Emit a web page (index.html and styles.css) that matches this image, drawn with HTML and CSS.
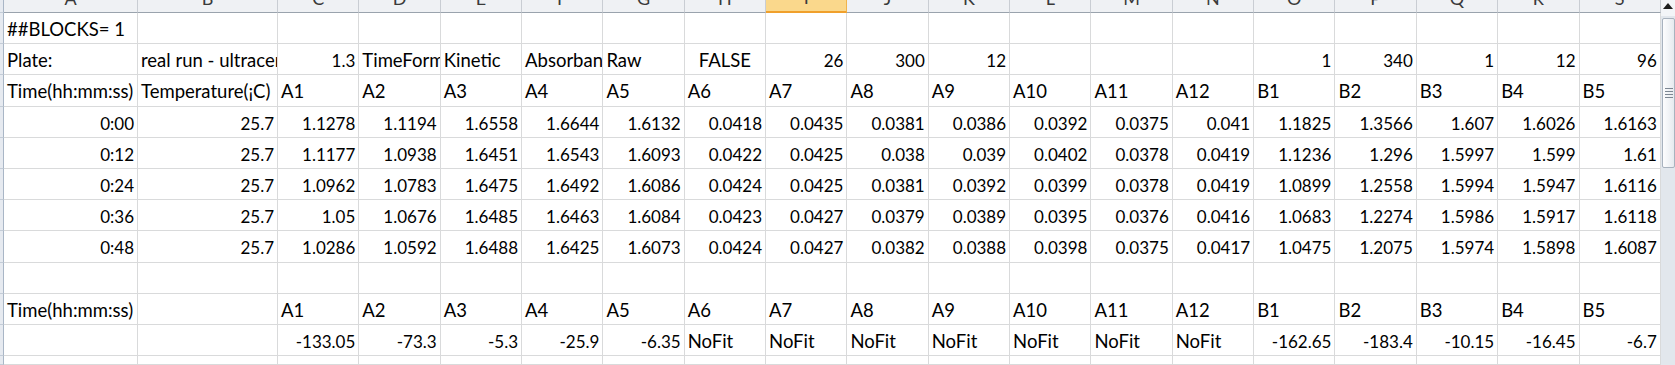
FILE: index.html
```html
<!DOCTYPE html>
<html lang="en">
<head>
    <meta charset="UTF-8">
    <title>Plate reader export</title>
    <link rel="stylesheet" href="styles.css">
</head>
<body>
<div class="window">
    <div class="sheet">
        <!-- column headers -->
        <span class="rh"></span><span class="ch">A</span><span class="ch">B</span><span class="ch">C</span><span class="ch">D</span><span class="ch">E</span><span class="ch">F</span><span class="ch">G</span><span class="ch">H</span><span class="ch sel">I</span><span class="ch">J</span><span class="ch">K</span><span class="ch">L</span><span class="ch">M</span><span class="ch">N</span><span class="ch">O</span><span class="ch">P</span><span class="ch">Q</span><span class="ch">R</span><span class="ch">S</span>

        <!-- row 1 -->
        <span class="rh"></span><span>##BLOCKS= 1</span><span></span><span></span><span></span><span></span><span></span><span></span><span></span><span></span><span></span><span></span><span></span><span></span><span></span><span></span><span></span><span></span><span></span><span></span>

        <!-- row 2 -->
        <span class="rh"></span><span>Plate:</span><span>real run - ultracentrifuge</span><span class="n">1.3</span><span>TimeFormat</span><span>Kinetic</span><span>Absorbance</span><span>Raw</span><span class="b">FALSE</span><span class="n">26</span><span class="n">300</span><span class="n">12</span><span></span><span></span><span></span><span class="n">1</span><span class="n">340</span><span class="n">1</span><span class="n">12</span><span class="n">96</span>

        <!-- row 3 -->
        <span class="rh"></span><span>Time(hh:mm:ss)</span><span>Temperature(¡C)</span><span>A1</span><span>A2</span><span>A3</span><span>A4</span><span>A5</span><span>A6</span><span>A7</span><span>A8</span><span>A9</span><span>A10</span><span>A11</span><span>A12</span><span>B1</span><span>B2</span><span>B3</span><span>B4</span><span>B5</span>

        <!-- rows 4-8: readings -->
        <span class="rh"></span><span class="n">0:00</span><span class="n">25.7</span><span class="n">1.1278</span><span class="n">1.1194</span><span class="n">1.6558</span><span class="n">1.6644</span><span class="n">1.6132</span><span class="n">0.0418</span><span class="n">0.0435</span><span class="n">0.0381</span><span class="n">0.0386</span><span class="n">0.0392</span><span class="n">0.0375</span><span class="n">0.041</span><span class="n">1.1825</span><span class="n">1.3566</span><span class="n">1.607</span><span class="n">1.6026</span><span class="n">1.6163</span>

        <span class="rh"></span><span class="n">0:12</span><span class="n">25.7</span><span class="n">1.1177</span><span class="n">1.0938</span><span class="n">1.6451</span><span class="n">1.6543</span><span class="n">1.6093</span><span class="n">0.0422</span><span class="n">0.0425</span><span class="n">0.038</span><span class="n">0.039</span><span class="n">0.0402</span><span class="n">0.0378</span><span class="n">0.0419</span><span class="n">1.1236</span><span class="n">1.296</span><span class="n">1.5997</span><span class="n">1.599</span><span class="n">1.61</span>

        <span class="rh"></span><span class="n">0:24</span><span class="n">25.7</span><span class="n">1.0962</span><span class="n">1.0783</span><span class="n">1.6475</span><span class="n">1.6492</span><span class="n">1.6086</span><span class="n">0.0424</span><span class="n">0.0425</span><span class="n">0.0381</span><span class="n">0.0392</span><span class="n">0.0399</span><span class="n">0.0378</span><span class="n">0.0419</span><span class="n">1.0899</span><span class="n">1.2558</span><span class="n">1.5994</span><span class="n">1.5947</span><span class="n">1.6116</span>

        <span class="rh"></span><span class="n">0:36</span><span class="n">25.7</span><span class="n">1.05</span><span class="n">1.0676</span><span class="n">1.6485</span><span class="n">1.6463</span><span class="n">1.6084</span><span class="n">0.0423</span><span class="n">0.0427</span><span class="n">0.0379</span><span class="n">0.0389</span><span class="n">0.0395</span><span class="n">0.0376</span><span class="n">0.0416</span><span class="n">1.0683</span><span class="n">1.2274</span><span class="n">1.5986</span><span class="n">1.5917</span><span class="n">1.6118</span>

        <span class="rh"></span><span class="n">0:48</span><span class="n">25.7</span><span class="n">1.0286</span><span class="n">1.0592</span><span class="n">1.6488</span><span class="n">1.6425</span><span class="n">1.6073</span><span class="n">0.0424</span><span class="n">0.0427</span><span class="n">0.0382</span><span class="n">0.0388</span><span class="n">0.0398</span><span class="n">0.0375</span><span class="n">0.0417</span><span class="n">1.0475</span><span class="n">1.2075</span><span class="n">1.5974</span><span class="n">1.5898</span><span class="n">1.6087</span>

        <!-- row 9 -->
        <span class="rh"></span><span></span><span></span><span></span><span></span><span></span><span></span><span></span><span></span><span></span><span></span><span></span><span></span><span></span><span></span><span></span><span></span><span></span><span></span><span></span>

        <!-- row 10 -->
        <span class="rh"></span><span>Time(hh:mm:ss)</span><span></span><span>A1</span><span>A2</span><span>A3</span><span>A4</span><span>A5</span><span>A6</span><span>A7</span><span>A8</span><span>A9</span><span>A10</span><span>A11</span><span>A12</span><span>B1</span><span>B2</span><span>B3</span><span>B4</span><span>B5</span>

        <!-- row 11: fit results -->
        <span class="rh"></span><span></span><span></span><span class="n">-133.05</span><span class="n">-73.3</span><span class="n">-5.3</span><span class="n">-25.9</span><span class="n">-6.35</span><span>NoFit</span><span>NoFit</span><span>NoFit</span><span>NoFit</span><span>NoFit</span><span>NoFit</span><span>NoFit</span><span class="n">-162.65</span><span class="n">-183.4</span><span class="n">-10.15</span><span class="n">-16.45</span><span class="n">-6.7</span>

        <!-- row 12 (cut off) -->
        <span class="rh"></span><span></span><span></span><span></span><span></span><span></span><span></span><span></span><span></span><span></span><span></span><span></span><span></span><span></span><span></span><span></span><span></span><span></span><span></span><span></span>
    </div>

    <div class="vscroll">
        <div class="up"></div>
        <div class="thumb"><div class="grip"></div></div>
    </div>
</div>
</body>
</html>
```

FILE: styles.css
```css
body {
    margin: 0;
    background: #fff;
    font-family: Lato, "Liberation Sans", sans-serif;
    color: #000;
    overflow: hidden;
}

.window {
    display: flex;
    height: 365px;
    overflow: hidden;
}

.sheet {
    flex: none;
    width: 1661px;
    display: grid;
    grid-template-columns: 4px 134px 140px repeat(17, 81.35px);
    grid-template-rows: 13px repeat(11, 31.2px) 1fr;
}

.sheet > span {
    box-sizing: border-box;
    border-right: 1px solid #d9dadb;
    border-bottom: 1px solid #d9dadb;
    overflow: hidden;
    white-space: nowrap;
    font-size: 18.5px;
    line-height: 29px;
    padding: 2px 3px 0;
}

.sheet > .n {
    text-align: right;
    font-size: 17px;
    line-height: 28px;
    padding-top: 3px;
}

.sheet > .b {
    text-align: center;
}

/* row header stub on the left */
.sheet > .rh {
    padding: 0;
    background: #e6eaf0;
    border-right-color: #a9b6c6;
    border-bottom-color: #c3ccd7;
}

/* column letters, mostly scrolled off the top */
.sheet > .ch {
    display: flex;
    align-items: flex-end;
    justify-content: center;
    padding: 0 0 3px;
    line-height: normal;
    font-size: 18px;
    color: #3a3a3a;
    background: #eff1f4;
    border-right-color: #c9cdd3;
    border-bottom-color: #9aa3ad;
}

.sheet > .ch.sel {
    background: #fad88c;
    border-right-color: #f0b44c;
    border-bottom: 2px solid #f0a02c;
}

.vscroll {
    width: 14px;
    background: #e2e7ed;
    display: flex;
    flex-direction: column;
}

.vscroll .up {
    height: 16px;
    box-sizing: border-box;
    padding-top: 3px;
    display: flex;
    justify-content: center;
    background: #f3f5f8;
}

.vscroll .up::before {
    content: "";
    width: 0;
    height: 0;
    border-left: 5px solid transparent;
    border-right: 5px solid transparent;
    border-bottom: 6px solid #1e1e1e;
}

.vscroll .thumb {
    margin: 2px 0 0 1px;
    height: 150px;
    box-sizing: border-box;
    border: 1px solid #a8b2be;
    border-radius: 2px;
    background: linear-gradient(to right, #fdfdfe, #e6eaef);
    display: flex;
    align-items: center;
    justify-content: center;
}

.vscroll .grip {
    width: 8px;
    height: 11px;
    background: repeating-linear-gradient(to bottom, #7d8793 0 1px, transparent 1px 3px);
}
```
